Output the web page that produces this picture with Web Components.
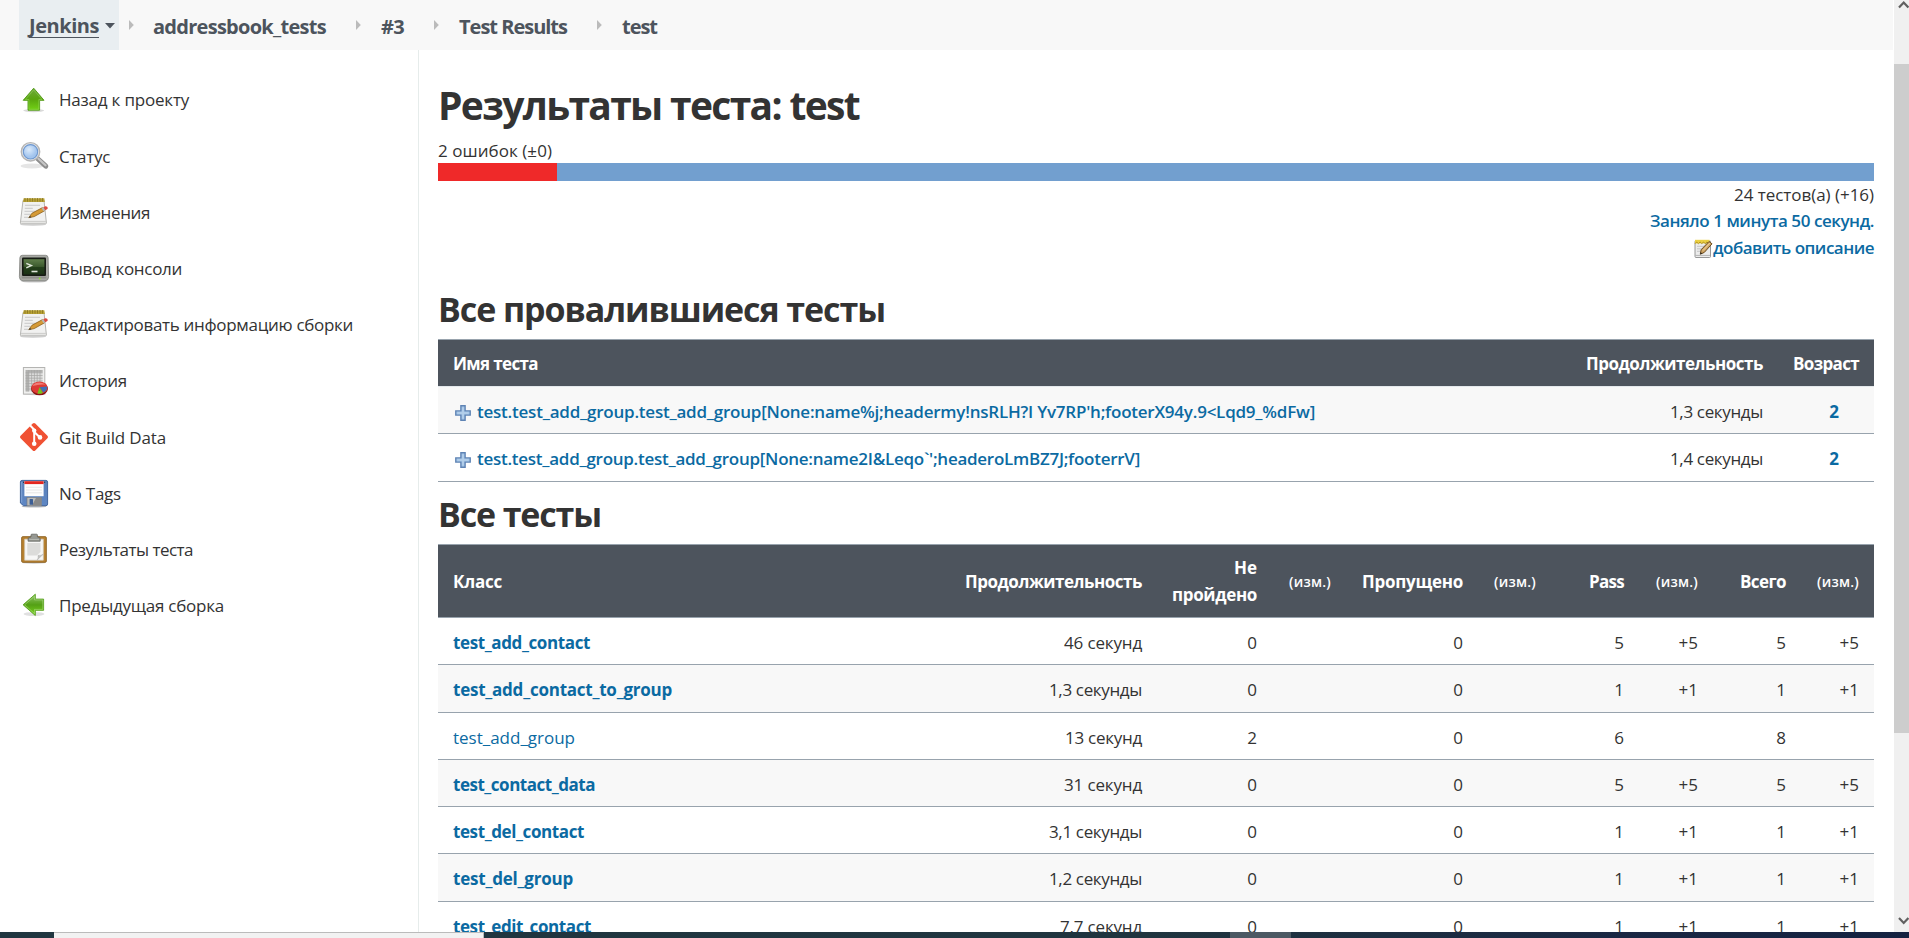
<!DOCTYPE html>
<html lang="ru">
<head>
<meta charset="utf-8">
<title>Jenkins</title>
<style>
html,body{margin:0;height:100%;overflow:hidden;background:#fff}
body{font-family:"Open Sans","Noto Sans",sans-serif;font-size:17px;color:#333}
</style>
</head>
<body>
<jk-app></jk-app>
<script>
const define=(name,html,setup)=>customElements.define(name,class extends HTMLElement{
  connectedCallback(){
    if(this.shadowRoot)return;
    const t=document.createElement('template');
    t.innerHTML=typeof html==='function'?html(this):html;
    this.attachShadow({mode:'open'}).append(t.content.cloneNode(true));
    if(setup)setup(this);
  }
});

/* Text run tracked to a given advance width (w, including 1px of side bearing). */
define('jk-text',`<style>:host{display:inline-block;white-space:nowrap}</style><slot></slot>`,el=>{
  const w=parseFloat(el.getAttribute('w'))-1;
  if(!w)return;
  const n=[...el.textContent].length;
  const ls=(w-el.getBoundingClientRect().width)/n;
  el.style.letterSpacing=ls+'px';
});

const ICONS={
up:`<defs><linearGradient id="g" x1="0" y1="0" x2="0" y2="1"><stop offset="0" stop-color="#6fa83e"/><stop offset=".5" stop-color="#59a50e"/><stop offset="1" stop-color="#73d216"/></linearGradient></defs><ellipse cx="14.7" cy="25.6" rx="10.5" ry="1.6" fill="#000" opacity=".15"/><path d="M14.7 3.2 25 15.3h-4.4v9.9H9v-9.9H4.2z" fill="url(#g)" stroke="#4f9a12" stroke-width=".9"/><path d="M14.7 4.9 23 14.5h-3.2v9.8H9.9v-9.8H6.4z" fill="none" stroke="#a6e070" stroke-width=".7" opacity=".6"/>`,
left:`<defs><linearGradient id="g" x1="0" y1="0" x2="0" y2="1"><stop offset="0" stop-color="#8fc46a"/><stop offset=".5" stop-color="#54a015"/><stop offset="1" stop-color="#7ad51e"/></linearGradient></defs><ellipse cx="15" cy="24" rx="10.5" ry="2" fill="#000" opacity=".12"/><path d="M4.1 14.8 16.3 4.2v4.9h8.3v11.2h-8.3v5.2z" fill="url(#g)" stroke="#57a01c" stroke-width=".9"/><path d="M5.7 14.8 15.5 6.3v3.6h8.3v9.5h-8.3v4.2z" fill="none" stroke="#c5eca3" stroke-width=".7" opacity=".6"/>`,
search:`<defs><radialGradient id="g" cx=".4" cy=".35"><stop offset="0" stop-color="#dcebfb"/><stop offset="1" stop-color="#a3c5ee"/></radialGradient></defs><ellipse cx="13" cy="25" rx="11.5" ry="2.4" fill="#000" opacity=".1"/><path d="m18.5 17.5 8.3 7.7" stroke="#8d8d8d" stroke-width="5" stroke-linecap="round"/><path d="m19.5 17.7 7 6.6" stroke="#c6c6c6" stroke-width="2.2" stroke-linecap="round"/><circle cx="11.5" cy="10.8" r="9.2" fill="#e8e8e8" stroke="#b5b5b5" stroke-width="1.4"/><circle cx="11.5" cy="10.8" r="7.2" fill="url(#g)" stroke="#6d97cf" stroke-width="1.1"/>`,
note:`<ellipse cx="14" cy="27.6" rx="13" ry="1.4" fill="#000" opacity=".15"/><path d="M4 3.5h21l2.4 22.4q0 .9-.9.9H2.3q-.9 0-.9-.9z" fill="#f1f1f0" stroke="#b5b5b2" stroke-width="1"/><path d="M2 24.6h25" stroke="#d0d0ce" stroke-width="1.5"/><path d="M4.6 1.2h20.7l.6 3.8H4z" fill="#b8a236"/><path d="M6 1v3.6M8.5 1v3.6M11 1v3.6M13.5 1v3.6M16 1v3.6M18.5 1v3.6M21 1v3.6M23.5 1v3.6" stroke="#7f6d1e" stroke-width=".7"/><path d="M6 8.3h15M5.8 11.3h8M5.5 14.3h13M5.3 17.3h6M5 20.3h4" stroke="#c3c3c3" stroke-width=".9"/><path d="m9.7 20.7 3.2-4.4 10.6-5.7 2.2 3.1-10.5 5.9z" fill="#d59a36" stroke="#8c5f1c" stroke-width=".8"/><path d="m9.7 20.7 1.5-2 1.1 1.7z" fill="#444"/><path d="m22.5 11.1 1.9-1 1.8 3.2-1.7 1z" fill="#b5b9b5"/><path d="m24.3 10.2 2-.9q2.2-.2 2.5 1.8-.2 1-1.2 1.5l-1.3.7z" fill="#dc4b42"/>`,
term:`<defs><linearGradient id="g" x1="0" y1="0" x2="0" y2="1"><stop offset="0" stop-color="#5f7e4b"/><stop offset=".48" stop-color="#3c5a2e"/><stop offset=".5" stop-color="#24401b"/><stop offset="1" stop-color="#1b3216"/></linearGradient></defs><ellipse cx="15" cy="28.3" rx="13" ry="1.3" fill="#000" opacity=".2"/><path d="M3.4 2.3h23.2q2.3 0 2.5 2.4l.5 19q0 4-3.7 4.2H4.1Q.4 27.7.4 23.7l.5-19Q1.1 2.3 3.4 2.3z" fill="#a9aaa5" stroke="#7e7f7b" stroke-width=".8"/><path d="M2.7 24.5h24.6" stroke="#8e8f8a" stroke-width="2"/><rect x="3" y="4.6" width="24" height="18.4" rx="1" fill="#171c15"/><rect x="4.6" y="6.2" width="20.8" height="15.2" fill="url(#g)"/><path d="m7.3 10.4 5 2.2-5 2.3" fill="none" stroke="#dfe6da" stroke-width="1.5"/><path d="M12.5 18.5h6" stroke="#dfe6da" stroke-width="1.6"/><circle cx="20.7" cy="25.4" r=".9" fill="#8ae234"/>`,
chart:`<ellipse cx="15" cy="28" rx="11" ry="1.2" fill="#000" opacity=".15"/><rect x="4.4" y="1.5" width="21.4" height="26.6" fill="#f0f0ef" stroke="#b4b4b2" stroke-width="1"/><rect x="6.6" y="4" width="17" height="21.4" fill="#dcdcdb"/><path d="M6.6 4h17v2.5h-17zM6.6 4h3.2v21.4H6.6z" fill="#b2b2b0"/><path d="M6.6 6.8h17M6.6 9.5h17M6.6 12.2h17M6.6 14.9h17M6.6 17.6h17M6.6 20.3h17M6.6 23h17M9.8 4v21.4M12.6 4v21.4M15.4 4v21.4M18.2 4v21.4M21 4v21.4" stroke="#a5a5a3" stroke-width=".7"/><ellipse cx="20.5" cy="23" rx="8.4" ry="6.3" fill="#8a1414"/><ellipse cx="20.5" cy="21.6" rx="8.2" ry="6.2" fill="#dd3b35"/><path d="M13.5 20q1.5-3.4 7-3.6 4 .2 6 2.2-6-.8-13 1.4z" fill="#f27c76"/><path d="m20.5 21.3 7.7-.8q.5 3.8-3.8 6z" fill="#3f70b5"/><path d="m20.5 21.3 3.4 5.6q-2.8 1.3-5.5.7z" fill="#73c51c"/>`,
git:`<rect x="4.6" y="4.6" width="20.8" height="20.8" rx="1.8" transform="rotate(45 15 15)" fill="#f05133"/><path d="M11 3.3 15.2 7.7V22M15.4 10l5 5" fill="none" stroke="#fff" stroke-width="2"/><circle cx="15.2" cy="8.6" r="2.2" fill="#fff"/><circle cx="15.2" cy="21.8" r="2.3" fill="#fff"/><circle cx="21" cy="15.4" r="2.3" fill="#fff"/>`,
disk:`<defs><linearGradient id="g" x1="0" y1="0" x2="0" y2="1"><stop offset="0" stop-color="#5980b9"/><stop offset="1" stop-color="#5f87c4"/></linearGradient></defs><ellipse cx="15" cy="28.5" rx="12.5" ry="1" fill="#000" opacity=".25"/><path d="M3 2.4h24q1.6 0 1.6 1.6v22q0 1.7-1.6 1.7H4.5L1.4 25V4q0-1.6 1.6-1.6z" fill="url(#g)" stroke="#395c96" stroke-width=".9"/><path d="M2.7 4v20.5" stroke="#8badde" stroke-width=".8"/><rect x="5.4" y="3.2" width="19.2" height="15" fill="#fdfdfd"/><path d="M5.4 3.2h19.2v2.9H5.4z" fill="#e3261f"/><path d="M7 9.3h16M7 12h16M7 14.8h16" stroke="#ddd" stroke-width=".7"/><path d="M4 3.8h1v1H4zM25.2 3.8h1v1h-1z" fill="#222"/><rect x="8" y="19.5" width="14.5" height="8.3" fill="#b9bab8" stroke="#777" stroke-width=".6"/><path d="m17 20 5 0v7.4h-9z" fill="#888"/><rect x="10.6" y="21" width="3.4" height="5.7" rx=".5" fill="#3c5e95"/>`,
clip:`<ellipse cx="15" cy="28.8" rx="11.5" ry="1.1" fill="#000" opacity=".15"/><rect x="2.7" y="2.7" width="24.6" height="25.6" rx="1" fill="#b88231" stroke="#885a18" stroke-width=".9"/><path d="M5.7 5.2h18.6v21H5.7z" fill="#f7f7f6" stroke="#d2cdc3" stroke-width=".7"/><path d="M8.3 9h13.2v9l-3.8 3.4H8.3z" fill="#dcdcda"/><path d="M18 26.2q1.7-2 1-4.9 2.7.6 5.3-1.1z" fill="#c2c2bf" stroke="#aaa" stroke-width=".4"/><path d="M9.1 7.2V4.9q0-1.2 1.2-1.4l1.7-.5v-2q0-.8.9-.8h4.6q.9 0 .9.8v2l1.6.5q1.2.2 1.2 1.4v2.3z" fill="#969892" stroke="#62645f" stroke-width=".8"/><path d="M10.2 5.5h9.8" stroke="#bdbfb8" stroke-width=".8"/>`,
plus:`<path d="M5.9.8h4.2v5.1h5.1v4.2h-5.1v5.1H5.9v-5.1H.8V5.9h5.1z" fill="#a9c8e8" stroke="#5e83b4" stroke-width="1.4"/><path d="M8 3v10M3 8h10" stroke="#b7d1ea" stroke-width="1"/>`,
pencil:`<path d="M1 2.2h15.5v15.3q0 1-1 1H2q-1 0-1-1z" fill="#ececec" stroke="#8c8c8c" stroke-width=".9"/><path d="M1 16.4h15" stroke="#b3b3b3"/><path d="M1 .8h14.6v3.6H1z" fill="#ebd043"/><path d="M1 4.7 2.7 3l1.7 1.7L6.1 3l1.7 1.7L9.5 3l1.7 1.7L12.9 3l1.7 1.7" fill="none" stroke="#a38312" stroke-width=".8"/><path d="M3 7.3h8M3 9.8h6M3 12.3h3" stroke="#bbb" stroke-width=".8"/><path d="m6.3 15.2.8-4.4L15 2.5l3 2.3-7.7 8.6z" fill="#d0a565" stroke="#6b4b1c" stroke-width="1"/><path d="m6.3 15.2.4-2 1.7 1.2z" fill="#222"/><path d="m9 11.5 7-7.4" stroke="#f2d9a6" stroke-width=".9"/>`
};
define('jk-icon',el=>{
  const s=el.getAttribute('size')||30;
  return `<style>:host{display:block;flex:none;width:${s}px;height:${s}px}svg{display:block;overflow:visible}</style><svg width="${s}" height="${s}" viewBox="0 0 ${s} ${s}">${ICONS[el.getAttribute('name')]}</svg>`;
});

define('jk-crumbs',()=>{
  const items=[['Jenkins',71],['addressbook_tests',174],['#3',24],['Test Results',109],['test',36]];
  const gaps=[[10,19],[30,20],[30,20],[30,20]];
  return `<style>
  :host{display:flex;height:50px;width:1893px;background:#f8f8f8;color:#4d545d;font-size:20px;font-weight:700;box-sizing:border-box;padding-left:19px}
  .i{display:flex;align-items:center;height:50px;padding-top:3px;box-sizing:border-box;line-height:46px}
  .h{width:100px;padding-left:10px;background:#e9eef1;gap:6px}
  .h jk-text{border-bottom:1px solid #4d545d;line-height:22px;height:22px}
  svg{display:block}
  .s{width:5px;height:50px;display:flex;align-items:center}
  </style><div class="i h"><jk-text w="71">Jenkins</jk-text><svg width="10" height="6" style="margin-top:-2px"><path d="M0 0h10L5 5.5z" fill="#4d545d"/></svg></div>`+
  items.slice(1).map((t,k)=>`<div class="s" style="margin:0 ${gaps[k][1]}px 0 ${gaps[k][0]}px"><svg width="5" height="10"><path d="M0 0 4.8 5 0 10z" fill="#bbb"/></svg></div><div class="i"><jk-text w="${t[1]}">${t[0]}</jk-text></div>`).join('');
});

define('jk-task',el=>`<style>
:host{display:flex;align-items:center;gap:10px;height:56.2px;line-height:26px}
jk-text{padding-top:1.4px}
</style><jk-icon name="${el.getAttribute('icon')}"></jk-icon><jk-text w="${el.getAttribute('w')}">${el.textContent}</jk-text>`);

define('jk-side',`<style>
:host{display:block;width:419px;box-sizing:border-box;border-right:1px solid #e6eceb;padding:21.6px 0 0 19px}
</style>
<jk-task icon="up" w="131">Назад к проекту</jk-task>
<jk-task icon="search" w="52">Статус</jk-task>
<jk-task icon="note" w="92">Изменения</jk-task>
<jk-task icon="term" w="124">Вывод консоли</jk-task>
<jk-task icon="note" w="295">Редактировать информацию сборки</jk-task>
<jk-task icon="chart" w="69">История</jk-task>
<jk-task icon="git" w="108">Git Build Data</jk-task>
<jk-task icon="disk" w="63">No Tags</jk-task>
<jk-task icon="clip" w="135">Результаты теста</jk-task>
<jk-task icon="left" w="166">Предыдущая сборка</jk-task>`);

define('jk-summary',`<style>
:host{display:block}
h1{margin:0;font-size:39px;line-height:55px;height:60px;color:#333}
.f{line-height:27px;height:26px}
.bar{display:flex;height:18px;background:#729fcf}
.bar i{width:119px;background:#ef2929}
.r{display:flex;flex-direction:column;align-items:flex-end;line-height:27px;font-weight:400}
.r div{display:flex;align-items:center;height:26.6px}
.l{color:#0b6aa2;font-weight:600}
jk-icon{margin-top:3px}
</style>
<h1><jk-text w="422">Результаты теста: test</jk-text></h1>
<div class="f"><jk-text w="115">2 ошибок (±0)</jk-text></div>
<div class="bar"><i></i></div>
<div class="r"><div><jk-text w="141">24 тестов(а) (+16)</jk-text></div>
<div class="l"><jk-text w="225">Заняло 1 минута 50 секунд.</jk-text></div>
<div class="l"><jk-icon name="pencil" size="19"></jk-icon><jk-text w="162">добавить описание</jk-text></div></div>`);

const GRID=`
:host{display:block;border-top:1px solid #98a3ad}
.h,.row{display:grid;align-items:center;box-sizing:border-box;line-height:26.6px}
.h{background:#4d545d;color:#fff;font-weight:700}
.h>*,.row>*{padding:0 15px;text-align:right}
.h>:first-child,.row>:first-child{text-align:left}
.row{border-bottom:1px solid #98a3ad;padding-top:4px}
.g{background:#f8f8f8}
a{color:#0b6aa2}`;

define('jk-failed',()=>{
  const row=(h,c,name,w,t)=>`<div class="row ${c}" style="height:${h}px"><div class="n"><jk-icon name="plus" size="16"></jk-icon><a><jk-text w="${w}">${name}</jk-text></a></div><div><jk-text w="94">${t}</jk-text></div><div class="c"><a>2</a></div></div>`;
  return `<style>${GRID}
  .h,.row{grid-template-columns:1131px 208px 97px}
  .h{height:47px;border-bottom:1px solid #e4e9ec;padding-top:2px}
  .row>.n{display:flex;align-items:center;gap:6px;padding-left:17px}
  .n jk-icon{margin-top:2px}
  a{font-weight:600}
  .c a{font-weight:700}
  .row>.c{text-align:center;padding:0 0 0 17px}
  .h>*,.row>*{white-space:nowrap}.h>:nth-child(2),.row>:nth-child(2){padding-right:14px}
  </style><div class="h"><div><jk-text w="86">Имя теста</jk-text></div><div><jk-text w="178">Продолжительность</jk-text></div><div style="padding-left:0"><jk-text w="67">Возраст</jk-text></div></div>`+
  row(47,'g',"test.test_add_group.test_add_group[None:name%j;headermy!nsRLH?I Yv7RP'h;footerX94y.9&lt;Lqd9_%dFw]",839,'1,3 секунды')+
  row(48,'',"test.test_add_group.test_add_group[None:name2I&amp;Leqo`';headeroLmBZ7J;footerrV]",664,'1,4 секунды');
});

define('jk-classes',()=>{
  const rows=[
  [47,'test_add_contact',138,'46 секунд',79,0,5,'+5',5,'+5'],
  [48,'test_add_contact_to_group',220,'1,3 секунды',94,0,1,'+1',1,'+1'],
  [47,'test_add_group',123,'13 секунд',78,2,6,'',8,''],
  [47,'test_contact_data',143,'31 секунд',79,0,5,'+5',5,'+5'],
  [47,'test_del_contact',132,'3,1 секунды',94,0,1,'+1',1,'+1'],
  [48,'test_del_group',121,'1,2 секунды',94,0,1,'+1',1,'+1'],
  [47,'test_edit_contact',139,'7,7 секунд',83,0,1,'+1',1,'+1']];
  const d='<div class="d"><jk-text w="43">(изм.)</jk-text></div>';
  return `<style>${GRID}
  .h,.row{grid-template-columns:719px 115px 74px 132px 73px 88px 74px 88px 73px}
  .h{height:73px;border-bottom:1px solid #98a3ad;padding-top:2px}
  .h>:first-child,.row>:first-child{display:flex;justify-content:space-between}
  .d{font-size:14px;font-weight:600}
  .h>*{padding-left:0}.h>:first-child{padding-left:15px}
  a{font-weight:700}.n{font-weight:400}
  </style><div class="h"><div><jk-text w="50">Класс</jk-text><jk-text w="178">Продолжительность</jk-text></div><div><jk-text w="24">Не</jk-text><br><jk-text w="86">пройдено</jk-text></div>${d}<div><jk-text w="102">Пропущено</jk-text></div>${d}<div><jk-text w="36">Pass</jk-text></div>${d}<div><jk-text w="47">Всего</jk-text></div>${d}</div>`+
  rows.map((r,i)=>`<div class="row ${i%2?'g':''}" style="height:${r[0]}px"><div><a class="${i==2?'n':''}"><jk-text w="${r[2]}">${r[1]}</jk-text></a><jk-text w="${r[4]}">${r[3]}</jk-text></div><div>${r[5]}</div><div></div><div>0</div><div></div><div>${r[6]}</div><div>${r[7]}</div><div>${r[8]}</div><div>${r[9]}</div></div>`).join('');
});

define('jk-scroll',`<style>
:host{display:flex;flex-direction:column;align-items:center;width:15px;height:932px;background:#f0f0f0}
.t{width:15px;height:669px;background:#cdcdcd}
.a{height:64px;width:15px}.b{flex:1;width:15px;display:flex;align-items:flex-end}
svg{display:block}
</style><div class="a"><svg width="15" height="17"><path d="m5 7.5 4.7-5 4.7 5" fill="none" stroke="#606060" stroke-width="2.2"/></svg></div><div class="t"></div><div class="b"><svg width="15" height="17"><path d="m5 3 4.7 5 4.7-5" fill="none" stroke="#606060" stroke-width="2.2"/></svg></div>`);

define('jk-taskbar',`<style>
:host{display:flex;height:6px;background:linear-gradient(90deg,#203640 0,#20353f 60%,#1a2743 85%,#142241)}
.w{margin-left:54px;width:430px;box-sizing:border-box;background:#f2f2f2;border:solid #bbb;border-width:1px 1px 0 0}
.x{margin-left:746px;width:61px;background:#4c5963}
</style><div class="w"></div><div class="x"></div>`);

define('jk-app',`<style>
:host{display:grid;grid-template-rows:932px 6px;width:1909px;height:938px;overflow:hidden;line-height:26px}
.v{display:flex;height:932px;overflow:hidden}
.p{width:1894px;height:932px;overflow:hidden}
.b{display:flex;height:882px}
main{width:1436px;padding:27px 0 0 19px}
h2{margin:0;font-size:34px;line-height:50px;color:#333}
.one{height:63px;padding-top:8px;box-sizing:border-box;margin-top:15.2px}
.two{height:62px;padding-top:7px;box-sizing:border-box}
</style><div class="v"><div class="p"><jk-crumbs></jk-crumbs><div class="b"><jk-side></jk-side><main>
<jk-summary></jk-summary>
<h2 class="one"><jk-text w="448">Все провалившиеся тесты</jk-text></h2>
<jk-failed></jk-failed>
<h2 class="two"><jk-text w="164">Все тесты</jk-text></h2>
<jk-classes></jk-classes>
</main></div></div><jk-scroll></jk-scroll></div><jk-taskbar></jk-taskbar>`);
</script>
</body>
</html>
